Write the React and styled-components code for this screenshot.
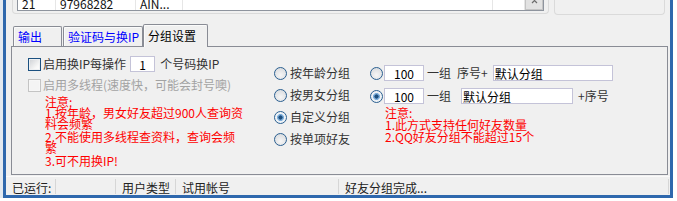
import React from 'react'
import styled, { createGlobalStyle } from 'styled-components'

const GlobalStyle = createGlobalStyle`
  html, body {
    margin: 0;
    padding: 0;
    background: #fff;
  }
  body {
    font-family: "Noto Sans CJK SC", "Noto Sans", sans-serif;
    font-size: 12px;
    color: #333;
  }
`

const Screen = styled.div`
  display: flex;
  width: 677px;
  height: 201px;
  overflow: hidden;
  background: #fff;
`

const Backdrop = styled.div`
  flex: none;
  width: ${(p) => p.$w}px;
  height: 198px;
  background: ${(p) => p.$bg};
`

const Window = styled.div`
  flex: none;
  width: 670px;
  height: 198px;
  box-sizing: border-box;
  border: 3px solid #2f68ad;
  border-top: none;
  background: #f0f0f0;
  display: flex;
  flex-direction: column;
`

/* top: list view left over from the previous section */
const TopArea = styled.div`
  height: 14px;
  display: flex;
  gap: 5px;
  padding-left: 6px;
`

const GroupEdge = styled.div`
  width: ${(p) => p.$w}px;
  height: ${(p) => p.$h}px;
  box-sizing: border-box;
  border: 1px solid #dadada;
  border-top: none;
  border-radius: 0 0 4px 4px;
  padding: 0 4px;
`

const ListView = styled.div`
  height: 11px;
  box-sizing: border-box;
  border: 1px solid #8e949e;
  border-top: none;
  background: #fff;
  display: flex;
  overflow: hidden;
`

const Cell = styled.div`
  flex: ${(p) => (p.$w ? 'none' : '1')};
  width: ${(p) => (p.$w ? `${p.$w}px` : 'auto')};
  box-sizing: border-box;
  border-right: 1px solid #e6e6e6;
  padding-left: 4px;
  margin-top: -2px;
  line-height: 12px;
  color: #111;
  white-space: nowrap;
`

const ScrollTrack = styled.div`
  flex: none;
  width: 18px;
  box-sizing: border-box;
  border: 1px solid #c4c4c4;
  border-top: none;
  background: #e2e2e2;
  display: flex;
  justify-content: center;
`

/* tabs */
const TabStrip = styled.div`
  height: 32px;
  display: flex;
  align-items: flex-end;
  padding-left: 7px;
`

const Tab = styled.div`
  flex: none;
  width: ${(p) => p.$w}px;
  height: ${(p) => (p.$active ? 23 : 20)}px;
  margin-right: ${(p) => p.$mr || 0}px;
  margin-bottom: ${(p) => (p.$active ? -1 : 0)}px;
  position: relative;
  z-index: ${(p) => (p.$active ? 1 : 0)};
  box-sizing: border-box;
  border: 1px solid #898c95;
  border-bottom: none;
  border-radius: 2px 2px 0 0;
  background: #f0f0f0;
  box-shadow: inset 1px 1px 0 #fbfbfb;
  padding-left: 4px;
  display: flex;
  align-items: center;
  color: ${(p) => (p.$active ? '#000' : '#0000ff')};
  line-height: 12px;
  white-space: nowrap;
`

const Panel = styled.div`
  margin-left: 5px;
  width: 657px;
  height: 129px;
  box-sizing: border-box;
  border: 1px solid #898c95;
  background: #f0f0f0;
  display: flex;
`

const LeftCol = styled.div`
  flex: none;
  width: 262px;
  box-sizing: border-box;
  padding: 9px 0 0 16px;
`

const MidCol = styled.div`
  flex: none;
  width: 96px;
  padding-top: 15px;
`

const RightCol = styled.div`
  flex: 1;
  padding-top: 18px;
`

const OptionRow = styled.div`
  display: flex;
  align-items: center;
  height: ${(p) => p.$h}px;
  margin-top: ${(p) => p.$mt || 0}px;
  white-space: nowrap;
`

const Check = styled.span`
  flex: none;
  width: 13px;
  height: 13px;
  box-sizing: border-box;
  border: 1px solid ${(p) => (p.$disabled ? '#c4c4c4' : '#1c5180')};
  background: ${(p) =>
    p.$disabled ? '#f4f4f4' : 'linear-gradient(135deg, #cdd0d4, #f7f7f7 70%, #fff)'};
  box-shadow: inset 0 0 0 1px ${(p) => (p.$disabled ? '#f7f7f7' : '#eef0f2')};
`

const Radio = styled.span`
  flex: none;
  width: 13px;
  height: 13px;
  box-sizing: border-box;
  border-radius: 50%;
  border: 1px solid #2a5f90;
  background: ${(p) =>
    p.$checked
      ? 'radial-gradient(circle, #1d4f7f 0 1.8px, #7fb0dc 2.4px 3.2px, #eef2f6 3.8px)'
      : 'radial-gradient(circle at 50% 65%, #f6f6f6, #d3d6da)'};
`

const Label = styled.span`
  margin-left: ${(p) => p.$ml || 0}px;
  color: ${(p) => (p.$disabled ? '#a3a3a3' : '#333')};
  line-height: 12px;
`

const Field = styled.input`
  flex: none;
  width: ${(p) => p.$w}px;
  height: 16px;
  margin: 0 0 0 ${(p) => p.$ml || 0}px;
  padding: 0 0 0 ${(p) => (p.$center ? 0 : 1)}px;
  box-sizing: border-box;
  border: 1px solid #c4c3d8;
  background: #fff;
  font: inherit;
  font-size: 12px;
  line-height: 14px;
  color: #000;
  text-align: ${(p) => (p.$center ? 'center' : 'left')};
  outline: none;
`

const Notes = styled.div`
  margin-top: ${(p) => p.$mt}px;
  padding-left: ${(p) => p.$pl}px;
  color: #ff0000;
  white-space: nowrap;
`

const NoteLine = styled.div`
  line-height: ${(p) => p.$lh}px;
  margin-top: ${(p) => p.$mt || 0}px;
`

/* status bar */
const StatusBar = styled.div`
  height: 19px;
  margin-top: 1px;
  box-sizing: border-box;
  border-top: 1px solid #fafafa;
  display: flex;
`

const StatusCell = styled.div`
  flex: none;
  width: ${(p) => p.$w}px;
  height: 15px;
  margin-top: 2px;
  box-sizing: border-box;
  border-left: ${(p) => (p.$first ? 'none' : '1px solid #d6d6d6')};
  border-right: ${(p) => (p.$last ? '1px solid #d6d6d6' : 'none')};
  padding: 2px 0 0 6px;
  line-height: 13px;
  color: #222;
  white-space: nowrap;
`

const leftNotes = [
  ['注意:'],
  ['1.按年龄，男女好友超过900人查询资', '料会频繁'],
  ['2.不能使用多线程查资料，查询会频', '繁'],
  ['3.可不用换IP!'],
]

const groupModes = [
  { label: '按年龄分组' },
  { label: '按男女分组' },
  { label: '自定义分组', checked: true },
  { label: '按单项好友' },
]

const rightNotes = ['注意:', '1.此方式支持任何好友数量', '2.QQ好友分组不能超过15个']

const statusCells = [
  { w: 49, text: '已运行:' },
  { w: 60, text: '' },
  { w: 60, text: '用户类型' },
  { w: 163, text: '试用帐号' },
  { w: 331, text: '好友分组完成...' },
]

const App = () => {
  return (
    <>
      <GlobalStyle />
      <Screen>
        <Backdrop $w={3} $bg='#e3e9f0' />
        <Window>
          <TopArea>
            <GroupEdge $w={537} $h={14}>
              <ListView>
                <Cell $w={38}>21</Cell>
                <Cell $w={80}>97968282</Cell>
                <Cell $w={47}>AIN...</Cell>
                <Cell $w={310} />
                <Cell />
                <ScrollTrack>
                  <svg width='7' height='4' viewBox='0 0 7 4'>
                    <path d='M1 3 L3.5 0.5 L6 3' fill='none' stroke='#6d6d6d' strokeWidth='1.2' />
                  </svg>
                </ScrollTrack>
              </ListView>
            </GroupEdge>
            <GroupEdge $w={111} $h={15} />
          </TopArea>

          <TabStrip>
            <Tab $w={49} $mr={1}>输出</Tab>
            <Tab $w={80}>验证码与换IP</Tab>
            <Tab $w={65} $active>分组设置</Tab>
          </TabStrip>

          <Panel>
            <LeftCol>
              <OptionRow $h={16}>
                <Check />
                <Label $ml={2}>启用换IP每操作</Label>
                <Field $w={25} $ml={4} $center readOnly value='1' />
                <Label $ml={5}>个号码换IP</Label>
              </OptionRow>
              <OptionRow $h={14} $mt={6}>
                <Check $disabled />
                <Label $ml={2} $disabled>启用多线程(速度快，可能会封号噢)</Label>
              </OptionRow>
              <Notes $mt={4} $pl={17}>
                {leftNotes.map((lines, i) =>
                  lines.map((line, j) => (
                    <NoteLine key={`${i}-${j}`} $lh={11} $mt={i > 1 && j === 0 ? 2 : 0}>
                      {line}
                    </NoteLine>
                  ))
                )}
              </Notes>
            </LeftCol>

            <MidCol>
              {groupModes.map((m) => (
                <OptionRow key={m.label} $h={22}>
                  <Radio $checked={m.checked} />
                  <Label $ml={3}>{m.label}</Label>
                </OptionRow>
              ))}
            </MidCol>

            <RightCol>
              <OptionRow $h={16}>
                <Radio />
                <Field $w={40} $ml={1} $center readOnly value='100' />
                <Label $ml={3}>一组</Label>
                <Label $ml={6}>序号+</Label>
                <Field $w={120} $ml={5} readOnly value='默认分组' />
              </OptionRow>
              <OptionRow $h={16} $mt={7}>
                <Radio $checked />
                <Field $w={40} $ml={1} $center readOnly value='100' />
                <Label $ml={3}>一组</Label>
                <Field $w={112} $ml={10} readOnly value='默认分组' />
                <Label $ml={5}>+序号</Label>
              </OptionRow>
              <Notes $mt={3} $pl={15}>
                {rightNotes.map((line) => (
                  <NoteLine key={line} $lh={12}>
                    {line}
                  </NoteLine>
                ))}
              </Notes>
            </RightCol>
          </Panel>

          <StatusBar>
            {statusCells.map((c, i) => (
              <StatusCell
                key={i}
                $w={c.w}
                $first={i === 0}
                $last={i === statusCells.length - 1}
              >
                {c.text}
              </StatusCell>
            ))}
          </StatusBar>
        </Window>
        <Backdrop $w={4} $bg='#fff' />
      </Screen>
    </>
  )
}

export default App
